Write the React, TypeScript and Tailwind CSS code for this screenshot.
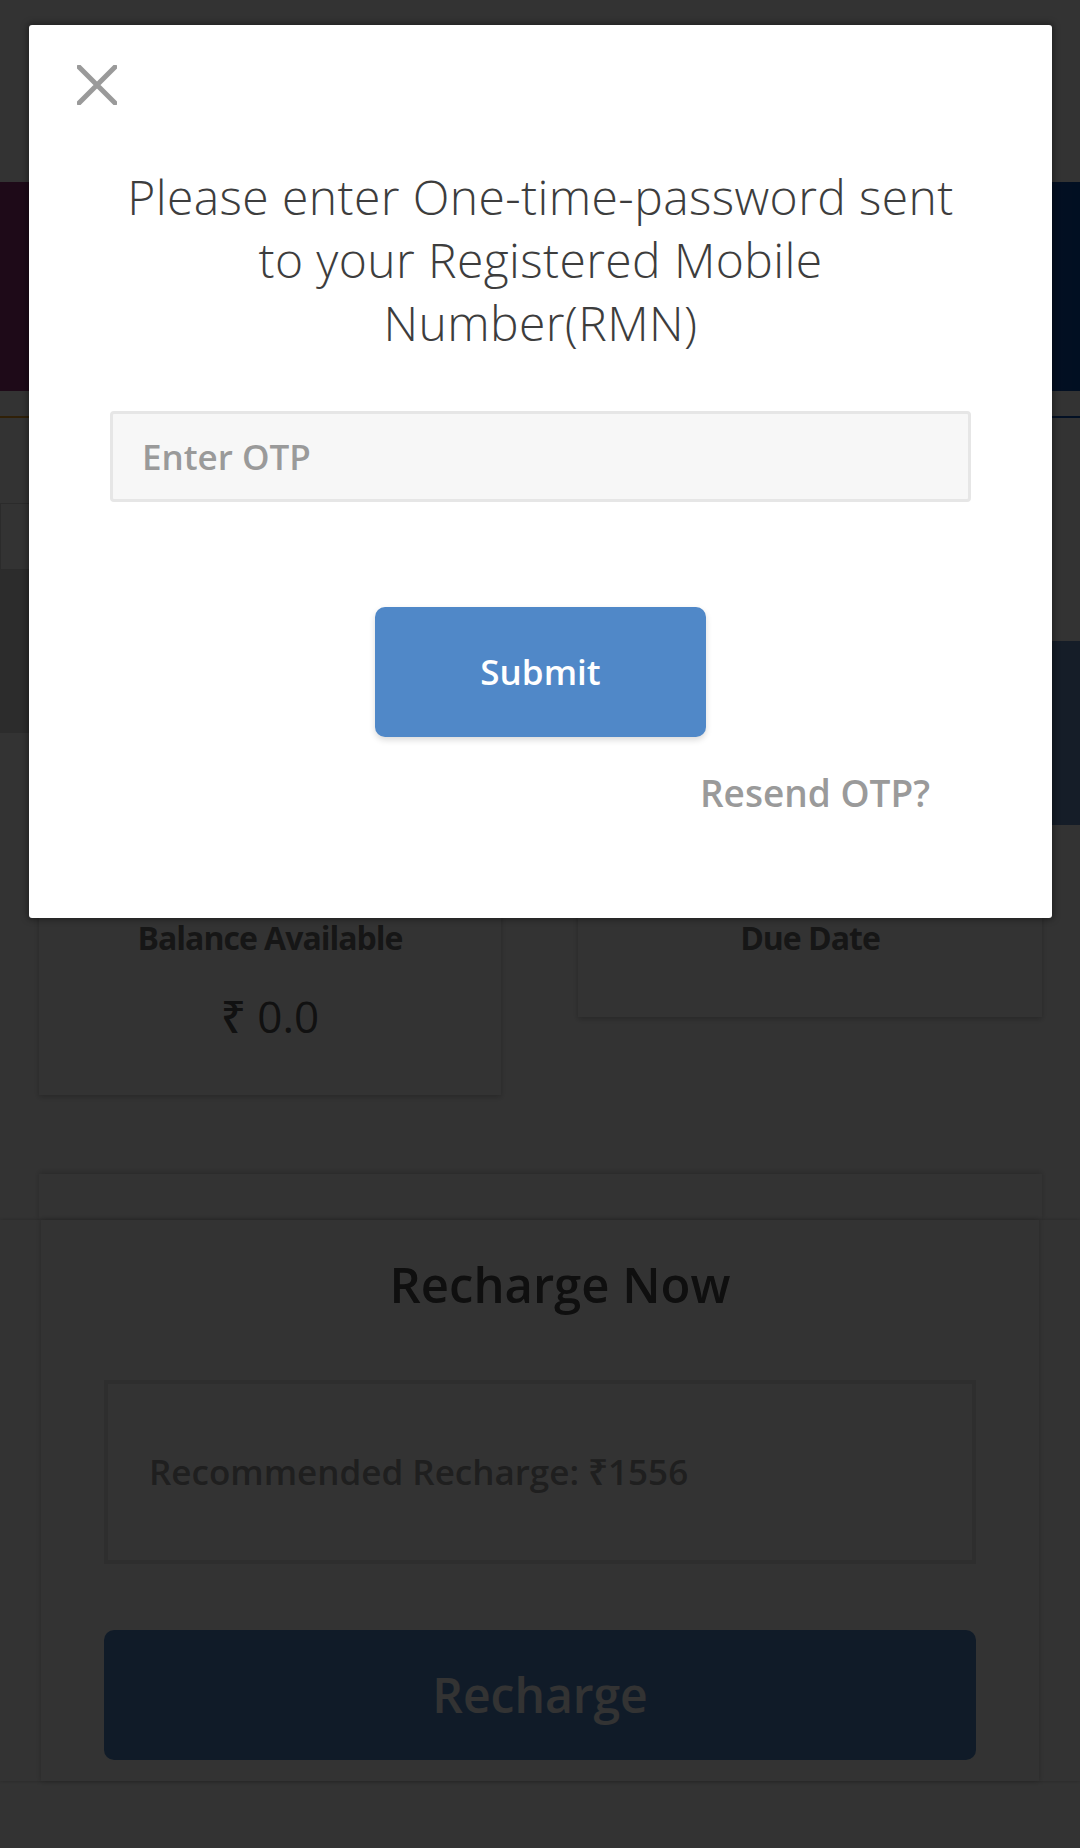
function CloseIcon() {
  return (
    <svg width="40" height="40" viewBox="0 0 40 40" className="blur-[0.6px]">
      <path d="M2 2 L38 38 M38 2 L2 38" stroke="#9a9a9a" strokeWidth="5" strokeLinecap="round" />
    </svg>
  );
}

function OtpModal() {
  return (
    <div className="absolute left-[29px] top-[25px] flex h-[893px] w-[1023px] flex-col items-center rounded-[3px] bg-white shadow-[0_0_6px_2px_rgba(0,0,0,0.35)]">
      <div className="flex w-full pl-[48px] pt-[40px]">
        <button className="h-[40px] w-[40px]">
          <CloseIcon />
        </button>
      </div>
      <h2 className="mt-[60px] max-w-[850px] text-center text-[48px] font-light leading-[63px] tracking-[0.4px] text-[#3d3d3d]">
        Please enter One-time-password sent to your Registered Mobile Number(RMN)
      </h2>
      <input
        placeholder="Enter OTP"
        className="mt-[57px] h-[91px] w-[861px] rounded-[4px] border-[3px] border-[#e6e6e6] bg-[#f7f7f7] pl-[29px] text-[35px] font-semibold outline-none placeholder:text-[#9a9a9a]"
      />
      <button className="mt-[105px] h-[130px] w-[331px] rounded-[10px] bg-[#5088c8] text-[35px] font-semibold text-white shadow-[0_3px_6px_rgba(0,0,0,0.15)]">
        Submit
      </button>
      <a className="mr-[122px] mt-[34px] self-end text-[37px] font-semibold leading-[43px] text-[#9a9a9a]">
        Resend OTP?
      </a>
    </div>
  );
}

export default function App() {
  return (
    <div className="relative h-[1848px] w-[1080px] overflow-hidden bg-white font-['Open_Sans','Noto_Sans',sans-serif]">
      {/* page behind the dialog */}
      <header className="h-[182px] bg-white" />
      <div className="h-[209px] bg-gradient-to-r from-[#963278] to-[#054baa]" />
      <div className="h-[25px]" />
      <div className="h-[2px] bg-gradient-to-r from-[#f0a020] to-[#0a50b4]" />
      <div className="h-[85px]" />
      <div className="h-[67px] w-[240px] border border-[#d8d8d8]" />
      <div className="flex h-[255px]">
        <div className="w-[560px]">
          <div className="h-[163px] bg-[#dcdcdc]" />
        </div>
        <div className="flex-1 pt-[71px]">
          <div className="h-[184px] bg-[#6991c8]" />
        </div>
      </div>
      <div className="h-[45px]" />

      <div className="flex items-start pl-[39px] pr-[38px]">
        <div className="flex w-[462px] flex-col items-center bg-white pb-[53px] pt-[48px] shadow-[0_2px_6px_rgba(0,0,0,0.25)]">
          <p className="text-[32px] font-bold leading-[40px] tracking-[-1px] text-[#707070]">Balance Available</p>
          <p className="mt-[32px] text-[44px] font-medium leading-[52px] text-[#555]">₹ 0.0</p>
        </div>
        <div className="ml-auto flex w-[464px] flex-col items-center bg-white pb-[59px] pt-[48px] shadow-[0_2px_6px_rgba(0,0,0,0.25)]">
          <p className="text-[32px] font-bold leading-[40px] tracking-[-1px] text-[#707070]">Due Date</p>
        </div>
      </div>

      <div className="mx-[39px] mt-[79px] h-[46px] w-[1003px] bg-white shadow-[0_-2px_6px_rgba(0,0,0,0.2)]" />
      <div className="h-[561px] shadow-[0_0_4px_rgba(0,0,0,0.25)]">
        <div className="mx-[41px] flex h-full flex-col items-center bg-white pb-[21px] pt-[36px] shadow-[0_0_6px_rgba(0,0,0,0.25)]">
          <h3 className="pl-[40px] text-[49px] font-semibold leading-[56px] text-[#4a4a4a]">Recharge Now</h3>
          <div className="mt-[68px] flex h-[184px] w-[872px] items-center border-4 border-[#e6e6e6] pl-[41px]">
            <span className="text-[35px] font-semibold text-[#999]">Recommended Recharge: ₹1556</span>
          </div>
          <button className="mt-[66px] h-[130px] w-[872px] rounded-[10px] bg-[#5088c8] text-[48px] font-semibold text-white">
            Recharge
          </button>
        </div>
      </div>

      {/* dim layer */}
      <div className="absolute inset-0 bg-black/80" />
      <OtpModal />
    </div>
  );
}
